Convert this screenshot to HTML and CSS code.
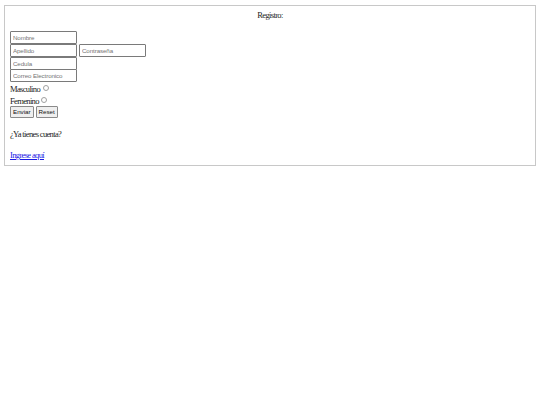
FILE: index.html
```html
<!DOCTYPE html>
<html lang="es">
<head>
<meta charset="utf-8">
<title>Registro</title>
<link rel="stylesheet" href="styles.css">
</head>
<body>
<div class="card">
  <h1 class="title">Registro:</h1>
  <form class="form">
    <div class="row"><input class="field" type="text" placeholder="Nombre"></div>
    <div class="row"><input class="field" type="text" placeholder="Apellido"><input class="field" type="password" placeholder="Contraseña"></div>
    <div class="row"><input class="field" type="text" placeholder="Cedula"></div>
    <div class="row"><input class="field" type="email" placeholder="Correo Electronico"></div>
    <label class="opt">Masculino <input class="radio" type="radio" name="genero"></label>
    <label class="opt">Femenino <input class="radio" type="radio" name="genero"></label>
    <div class="buttons">
      <button class="btn" type="submit">Enviar</button>
      <button class="btn" type="reset">Reset</button>
    </div>
  </form>
  <p class="question">¿Ya tienes cuenta?</p>
  <p class="login"><a class="link" href="#">Ingrese aquí</a></p>
</div>
</body>
</html>
```

FILE: styles.css
```css
html, body {
  margin: 0;
  padding: 0;
  background: #ffffff;
}

body {
  font-family: "Liberation Serif", "Times New Roman", serif;
  font-size: 8.5px;
  letter-spacing: -0.65px;
  color: #222;
}

.card {
  margin: 5px 4px 0 4px;
  border: 1px solid #c8c8c8;
  padding: 3px 5px 4px 5px;
  height: 161px;
  box-sizing: border-box;
}

.title {
  margin: 0;
  font-size: 8.5px;
  font-weight: normal;
  line-height: 12px;
  text-align: center;
}

.form {
  margin: 10px 0 0 0;
  display: flex;
  flex-direction: column;
}

.row {
  display: flex;
  gap: 2px;
  height: 12.8px;
}

.field {
  width: 67px;
  height: 13px;
  box-sizing: border-box;
  margin: 0;
  padding: 0 2px;
  border: 1px solid #7a7a7a;
  border-radius: 1px;
  font-family: "Liberation Sans", Arial, sans-serif;
  font-size: 6.2px;
  letter-spacing: -0.1px;
  background: #fff;
}

.field::placeholder {
  color: #757575;
}

.opt {
  display: flex;
  align-items: center;
  line-height: 12px;
  height: 12px;
  margin-top: 1px;
  margin-bottom: -1px;
  white-space: pre;
}

.radio {
  appearance: none;
  -webkit-appearance: none;
  width: 6px;
  height: 6px;
  margin: 0 0 2px 1px;
  border: 1px solid #a0a0a0;
  border-radius: 50%;
  background: #fff;
  box-sizing: border-box;
}

.buttons {
  display: flex;
  gap: 2px;
  margin-top: 0;
}

.btn {
  height: 12px;
  margin: 0;
  padding: 0 2px;
  border: 1px solid #8a8a8a;
  border-radius: 1px;
  background: #efefef;
  font-family: "Liberation Sans", Arial, sans-serif;
  font-size: 6.2px;
  letter-spacing: 0;
  color: #111;
  line-height: 10px;
}

.question {
  margin: 10px 0 0 0;
  line-height: 12px;
}

.login {
  margin: 9px 0 0 0;
  line-height: 12px;
}

.link {
  color: #1a1ae6;
  text-decoration: underline;
}
```
